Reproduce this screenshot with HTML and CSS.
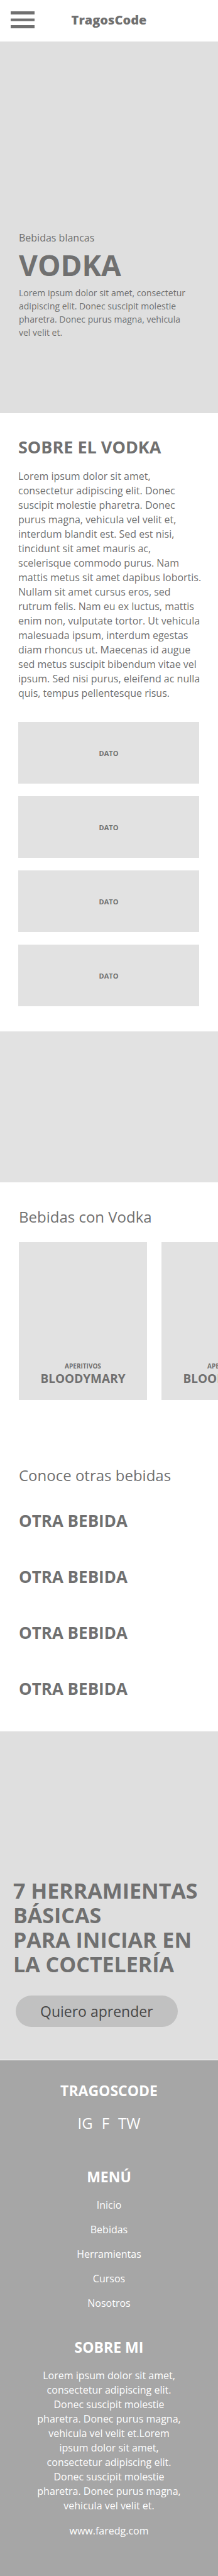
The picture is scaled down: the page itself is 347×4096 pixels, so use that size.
FILE: index.html
```html
<!DOCTYPE html>
<html lang="es">
<head>
  <meta charset="utf-8">
  <meta name="viewport" content="width=device-width, initial-scale=1">
  <title>TragosCode - Vodka</title>
  <link rel="stylesheet" href="styles.css">
</head>
<body>
  <header class="topbar">
    <button class="menu-button" type="button" aria-label="Abrir menú">
      <svg class="menu-icon" viewBox="0 0 38 27" aria-hidden="true">
        <rect x="0" y="0" width="38" height="5"/>
        <rect x="0" y="11.5" width="38" height="4"/>
        <rect x="0" y="22" width="38" height="5"/>
      </svg>
    </button>
    <a class="brand" href="#">TragosCode</a>
  </header>

  <main>
    <section class="hero">
      <p class="hero-category">Bebidas blancas</p>
      <h1 class="hero-title">VODKA</h1>
      <p class="hero-text">Lorem ipsum dolor sit amet, consectetur adipiscing elit. Donec suscipit molestie pharetra. Donec purus magna, vehicula vel velit et.</p>
    </section>

    <section class="about">
      <h2 class="about-title">SOBRE EL VODKA</h2>
      <p class="about-text">Lorem ipsum dolor sit amet, consectetur adipiscing elit. Donec suscipit molestie pharetra. Donec purus magna, vehicula vel velit et, interdum blandit est. Sed est nisi, tincidunt sit amet mauris ac, scelerisque commodo purus. Nam mattis metus sit amet dapibus lobortis. Nullam sit amet cursus eros, sed rutrum felis. Nam eu ex luctus, mattis enim non, vulputate tortor. Ut vehicula malesuada ipsum, interdum egestas diam rhoncus ut. Maecenas id augue sed metus suscipit bibendum vitae vel ipsum. Sed nisi purus, eleifend ac nulla quis, tempus pellentesque risus.</p>
      <ul class="facts">
        <li class="fact">DATO</li>
        <li class="fact">DATO</li>
        <li class="fact">DATO</li>
        <li class="fact">DATO</li>
      </ul>
    </section>

    <div class="banner"></div>

    <section class="drinks">
      <h2 class="section-title">Bebidas con Vodka</h2>
      <div class="carousel">
        <article class="drink">
          <p class="drink-type">APERITIVOS</p>
          <h3 class="drink-name">BLOODYMARY</h3>
        </article>
        <article class="drink">
          <p class="drink-type">APERITIVOS</p>
          <h3 class="drink-name">BLOODYMARY</h3>
        </article>
      </div>
    </section>

    <section class="others">
      <h2 class="section-title">Conoce otras bebidas</h2>
      <ul class="others-list">
        <li><a href="#">OTRA BEBIDA</a></li>
        <li><a href="#">OTRA BEBIDA</a></li>
        <li><a href="#">OTRA BEBIDA</a></li>
        <li><a href="#">OTRA BEBIDA</a></li>
      </ul>
    </section>

    <section class="promo">
      <h2 class="promo-title">7 HERRAMIENTAS BÁSICAS<br>PARA INICIAR EN LA COCTELERÍA</h2>
      <button class="promo-button" type="button">Quiero aprender</button>
    </section>
  </main>

  <footer class="footer">
    <h2 class="footer-title">TRAGOSCODE</h2>
    <div class="social">
      <a href="#">IG</a>
      <a href="#">F</a>
      <a href="#">TW</a>
    </div>
    <h2 class="footer-title footer-menu-title">MENÚ</h2>
    <nav class="footer-nav">
      <a href="#">Inicio</a>
      <a href="#">Bebidas</a>
      <a href="#">Herramientas</a>
      <a href="#">Cursos</a>
      <a href="#">Nosotros</a>
    </nav>
    <h2 class="footer-title footer-about-title">SOBRE MI</h2>
    <p class="footer-text">Lorem ipsum dolor sit amet, consectetur adipiscing elit. Donec suscipit molestie pharetra. Donec purus magna, vehicula vel velit et.Lorem ipsum dolor sit amet, consectetur adipiscing elit. Donec suscipit molestie pharetra. Donec purus magna, vehicula vel velit et.</p>
    <a class="footer-site" href="#">www.faredg.com</a>
  </footer>
</body>
</html>
```
FILE: styles.css
```css
* {
  box-sizing: border-box;
}

body,
h1,
h2,
h3,
p,
ul {
  margin: 0;
  padding: 0;
}

body {
  background: #fff;
  color: #707070;
  font-family: "Open Sans", "Noto Sans", sans-serif;
  font-size: 16px;
  line-height: 23px;
}

ul {
  list-style: none;
}

a {
  color: inherit;
  text-decoration: none;
}

button {
  border: 0;
  font-family: inherit;
  cursor: pointer;
}

/* Top bar */
.topbar {
  display: grid;
  grid-template-columns: 1fr auto 1fr;
  align-items: start;
  padding: 18px 17px 20px;
}

.menu-button {
  display: flex;
  width: 38px;
  padding: 0;
  background: none;
}

.menu-icon {
  width: 38px;
  height: 27px;
  fill: #707070;
}

.brand {
  font-size: 20px;
  font-weight: 800;
  line-height: 28px;
}

/* Hero */
.hero {
  display: flex;
  flex-direction: column;
  justify-content: flex-end;
  min-height: 591px;
  padding: 0 40px 118px 30px;
  background: #dfdfdf;
}

.hero-category {
  line-height: 24px;
}

.hero-title {
  margin: 3px 0 6px;
  font-size: 46px;
  font-weight: 700;
  line-height: 56px;
}

.hero-text {
  font-size: 14px;
  line-height: 21px;
}

/* About */
.about {
  padding: 36px 24px 40px 29px;
}

.about-title {
  font-size: 27px;
  font-weight: 700;
  line-height: 36px;
}

.about-text {
  margin-top: 17px;
}

.facts {
  display: grid;
  gap: 20px;
  margin: 34px 6px 0 0;
}

.fact {
  display: flex;
  align-items: center;
  justify-content: center;
  min-height: 98px;
  background: #e2e2e2;
  font-size: 11px;
  font-weight: 700;
}

.banner {
  height: 240px;
  background: #e2e2e2;
}

/* Drinks */
.section-title {
  font-size: 24px;
  font-weight: 400;
  line-height: 32px;
}

.drinks {
  padding: 39px 0 0 30px;
}

.carousel {
  display: flex;
  gap: 23px;
  margin-top: 24px;
  overflow-x: auto;
  scrollbar-width: none;
}

.drink {
  display: flex;
  flex: 0 0 204px;
  flex-direction: column;
  align-items: center;
  justify-content: flex-end;
  min-height: 251px;
  padding-bottom: 21px;
  background: #e2e2e2;
}

.drink-type {
  font-size: 10px;
  font-weight: 700;
  line-height: 14px;
}

.drink-name {
  font-size: 19px;
  font-weight: 700;
  line-height: 26px;
}

.others {
  padding: 104px 30px 50px;
}

.others-list {
  display: grid;
  gap: 53px;
  margin-top: 38px;
  font-size: 26px;
  font-weight: 700;
  line-height: 36px;
}

/* Promo */
.promo {
  display: flex;
  flex-direction: column;
  align-items: flex-start;
  justify-content: flex-end;
  min-height: 522px;
  padding: 0 20px 52px 21px;
  background: #dfdfdf;
}

.promo-title {
  font-size: 34px;
  font-weight: 700;
  line-height: 39px;
}

.promo-button {
  margin: 30px 0 0 4px;
  padding: 9px 39px;
  border-radius: 25px;
  background: #c1c1c1;
  color: #474747;
  font-size: 23px;
  line-height: 32px;
}

/* Footer */
.footer {
  display: flex;
  flex-direction: column;
  align-items: center;
  margin-top: 1px;
  padding: 32px 20px 60px;
  background: #a6a6a6;
  color: #fff;
  text-align: center;
}

.footer-title {
  font-size: 23px;
  font-weight: 700;
  line-height: 32px;
}

.social {
  display: flex;
  gap: 14px;
  margin-top: 20px;
  font-size: 24px;
  line-height: 32px;
}

.footer-menu-title {
  margin-top: 53px;
}

.footer-nav {
  display: grid;
  gap: 16px;
  margin-top: 18px;
}

.footer-about-title {
  margin-top: 42px;
}

.footer-text {
  max-width: 232px;
  margin-top: 18px;
}

.footer-site {
  margin-top: 17px;
}
```
